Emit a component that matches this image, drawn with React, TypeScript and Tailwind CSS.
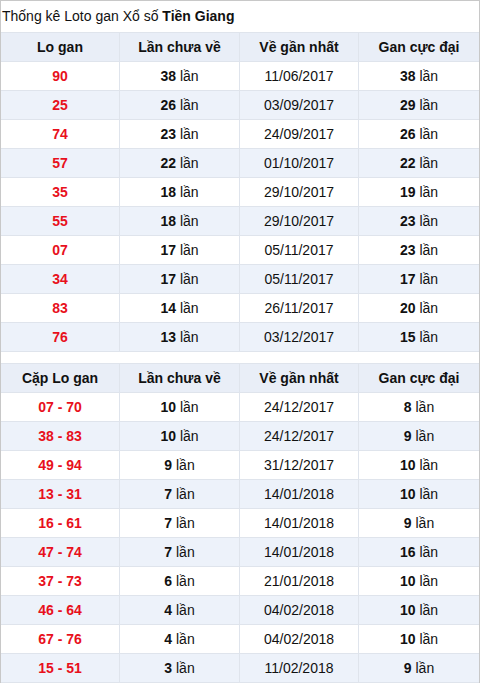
import React from "react";

type Row = [string, string, string, string];

const t1: Row[] = [
  ["90", "38", "11/06/2017", "38"],
  ["25", "26", "03/09/2017", "29"],
  ["74", "23", "24/09/2017", "26"],
  ["57", "22", "01/10/2017", "22"],
  ["35", "18", "29/10/2017", "19"],
  ["55", "18", "29/10/2017", "23"],
  ["07", "17", "05/11/2017", "23"],
  ["34", "17", "05/11/2017", "17"],
  ["83", "14", "26/11/2017", "20"],
  ["76", "13", "03/12/2017", "15"],
];

const t2: Row[] = [
  ["07 - 70", "10", "24/12/2017", "8"],
  ["38 - 83", "10", "24/12/2017", "9"],
  ["49 - 94", "9", "31/12/2017", "10"],
  ["13 - 31", "7", "14/01/2018", "10"],
  ["16 - 61", "7", "14/01/2018", "9"],
  ["47 - 74", "7", "14/01/2018", "16"],
  ["37 - 73", "6", "21/01/2018", "10"],
  ["46 - 64", "4", "04/02/2018", "10"],
  ["67 - 76", "4", "04/02/2018", "10"],
  ["15 - 51", "3", "11/02/2018", "9"],
];

const grid = "grid grid-cols-[119px_120px_119px_120px] h-[29px] border-b border-[#dfe4ec]";
const cell = "flex items-center justify-center border-r border-[#dfe4ec] last:border-r-0";

function Table({ first, rows }: { first: string; rows: Row[] }) {
  return (
    <div>
      <div className={`${grid} bg-[#e9eef7] text-[14px] font-bold text-[#111]`}>
        <div className={cell}>{first}</div>
        <div className={cell}>Lần chưa về</div>
        <div className={cell}>Về gần nhất</div>
        <div className={cell}>Gan cực đại</div>
      </div>
      {rows.map((r, i) => (
        <div key={i} className={`${grid} ${i % 2 === 1 ? "bg-[#edf2fa]" : "bg-white"} text-[14px] text-[#111]`}>
          <div className={`${cell} font-bold text-[#e8101c]`}>{r[0]}</div>
          <div className={cell}>
            <span><b>{r[1]}</b> lần</span>
          </div>
          <div className={cell}>{r[2]}</div>
          <div className={cell}>
            <span><b>{r[3]}</b> lần</span>
          </div>
        </div>
      ))}
    </div>
  );
}

export default function App() {
  return (
    <div
      className="w-[480px] h-[683px] overflow-hidden bg-white border-l border-t border-r border-[#c8c8c8]"
      style={{ fontFamily: '"Liberation Sans", Arial, sans-serif' }}
    >
      <div className="h-[32px] pl-[1px] pt-[6px] text-[14px] text-[#111] leading-[18px] border-b border-[#dfe4ec]">
        Thống kê Loto gan Xổ số <b>Tiền Giang</b>
      </div>
      <Table first="Lo gan" rows={t1} />
      <div className="h-[12px] border-b border-[#dfe4ec]" />
      <Table first="Cặp Lo gan" rows={t2} />
    </div>
  );
}
